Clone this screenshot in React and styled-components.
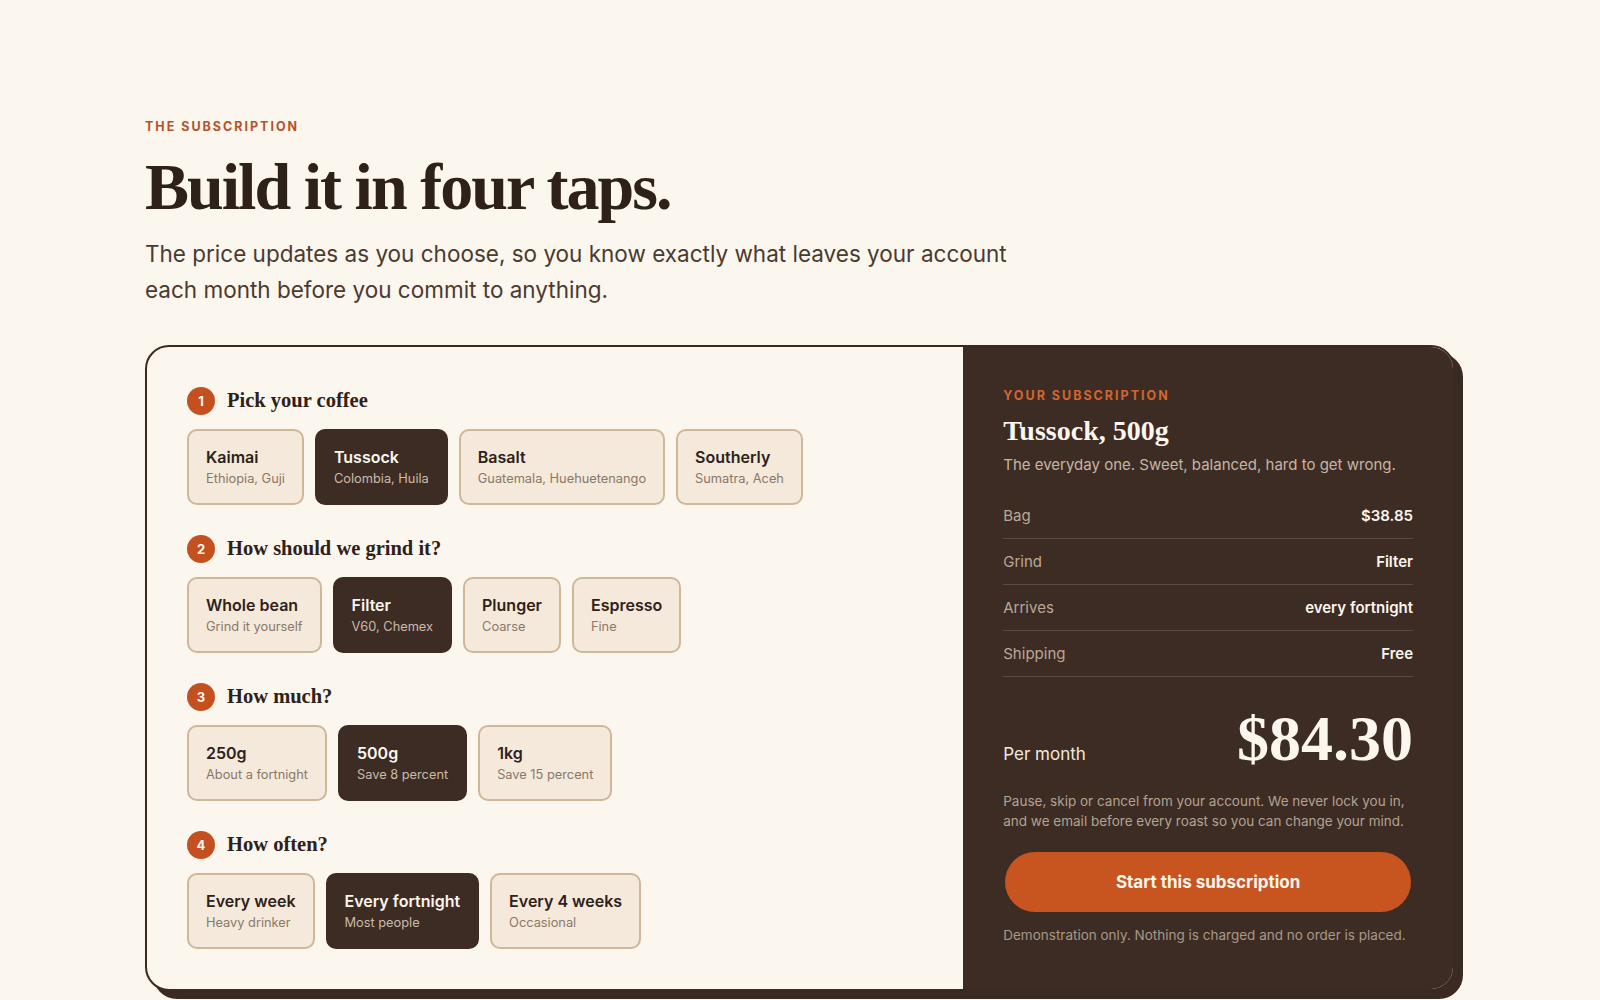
import React, { useState } from "react";
import styled, { createGlobalStyle } from "styled-components";

const SANS = `"Inter", "Lato", "Liberation Sans", sans-serif`;
const SERIF = `"Liberation Serif", "DejaVu Serif", serif`;

const Global = createGlobalStyle`
  * { box-sizing: border-box; }
  html, body { margin: 0; padding: 0; }
  body {
    background: #fbf6ee;
    font-family: ${SANS};
    color: #2e2119;
    -webkit-font-smoothing: antialiased;
  }
`;

const Page = styled.main`
  max-width: 1310px;
  margin: 0 auto;
  padding: 118px 0 40px;
`;

const Eyebrow = styled.div`
  font-family: ${SANS};
  font-size: 12.5px;
  font-weight: 700;
  letter-spacing: 0.16em;
  text-transform: uppercase;
  line-height: 18px;
  color: ${(p) => (p.$dark ? "#d4652f" : "#b5532a")};
`;

const Headline = styled.h1`
  margin: 15px 0 0;
  font-family: ${SERIF};
  font-weight: 700;
  font-size: 66px;
  line-height: 1.1;
  letter-spacing: -0.03em;
  color: #2e2119;
`;

const Lede = styled.p`
  margin: 12px 0 0;
  max-width: 880px;
  font-size: 22.5px;
  line-height: 36px;
  color: #4a3a30;
`;

const Card = styled.section`
  margin-top: 37px;
  display: grid;
  grid-template-columns: 5fr 3fr;
  border: 2px solid #3b2a22;
  border-radius: 24px;
  box-shadow: 8px 8px 0 #3b2a22;
  overflow: hidden;
  background: #fbf6ee;
`;

const Builder = styled.div`
  padding: 40px;
  display: flex;
  flex-direction: column;
  gap: 30px;
`;

const Step = styled.div`
  display: flex;
  flex-direction: column;
  gap: 14px;
`;

const StepHead = styled.div`
  display: flex;
  align-items: center;
  gap: 12px;
  height: 28px;
`;

const StepNum = styled.span`
  width: 28px;
  height: 28px;
  border-radius: 50%;
  background: #c4501f;
  color: #fff7ee;
  font-family: ${SANS};
  font-size: 13px;
  font-weight: 700;
  display: flex;
  align-items: center;
  justify-content: center;
`;

const StepTitle = styled.h3`
  margin: 0;
  font-family: ${SERIF};
  font-weight: 700;
  font-size: 20.5px;
  letter-spacing: 0;
  color: #2e2119;
`;

const Options = styled.div`
  display: flex;
  gap: 11px;
`;

const Option = styled.button`
  display: flex;
  flex-direction: column;
  align-items: flex-start;
  text-align: left;
  padding: 15px 17px;
  border-radius: 10px;
  border: 2px solid ${(p) => (p.$on ? "#3d2c24" : "#cfb797")};
  background: ${(p) => (p.$on ? "#3d2c24" : "#f4e9db")};
  cursor: pointer;
  font-family: ${SANS};
`;

const OptTitle = styled.span`
  font-size: 16px;
  line-height: 22px;
  font-weight: 600;
  color: ${(p) => (p.$on ? "#fbf6ee" : "#2e2119")};
`;

const OptSub = styled.span`
  margin-top: 2px;
  font-size: 12.8px;
  line-height: 18px;
  color: ${(p) => (p.$on ? "#cbbba9" : "#8a7868")};
`;

const Summary = styled.aside`
  background: #3d2c24;
  padding: 40px;
  display: flex;
  flex-direction: column;
  color: #fbf6ee;
`;

const SumTitle = styled.h2`
  margin: 10px 0 0;
  font-family: ${SERIF};
  font-weight: 700;
  font-size: 28px;
  line-height: 32px;
  letter-spacing: 0;
  color: #fbf6ee;
`;

const SumDesc = styled.p`
  margin: 6px 0 0;
  font-size: 15px;
  line-height: 24px;
  color: #c6b5a5;
`;

const Rows = styled.dl`
  margin: 16px 0 0;
`;

const Row = styled.div`
  display: flex;
  justify-content: space-between;
  align-items: center;
  height: 46px;
  border-bottom: 1px solid #5c4a3f;
`;

const RowLabel = styled.dt`
  font-size: 15px;
  color: #b9a898;
`;

const RowValue = styled.dd`
  margin: 0;
  font-size: 15px;
  font-weight: 600;
  color: #fbf6ee;
`;

const Total = styled.div`
  margin-top: 30px;
  display: flex;
  justify-content: space-between;
  align-items: baseline;
`;

const TotalLabel = styled.span`
  font-size: 17px;
  color: #f3e9dd;
`;

const TotalValue = styled.span`
  font-family: ${SERIF};
  font-weight: 700;
  font-size: 64px;
  line-height: 1;
  letter-spacing: 0;
  color: #fbf6ee;
`;

const Fine = styled.p`
  margin: ${(p) => p.$mt || 0}px 0 0;
  font-size: 13.5px;
  line-height: 20px;
  color: ${(p) => p.$c || "#b3a292"};
`;

const Cta = styled.button`
  margin: 21px 2px 0;
  height: 60px;
  border: none;
  border-radius: 30px;
  background: #c8541f;
  color: #fdf6ec;
  font-family: ${SANS};
  font-size: 17px;
  font-weight: 700;
  cursor: pointer;
`;

const coffees = [
  { id: "Kaimai", sub: "Ethiopia, Guji", base: 23.5, desc: "Bright and floral. Bergamot, peach and black tea." },
  { id: "Tussock", sub: "Colombia, Huila", base: 21.115, desc: "The everyday one. Sweet, balanced, hard to get wrong." },
  { id: "Basalt", sub: "Guatemala, Huehuetenango", base: 22, desc: "Cocoa and brown sugar, with a clean finish." },
  { id: "Southerly", sub: "Sumatra, Aceh", base: 22.5, desc: "Earthy and heavy. Cedar, spice and dark chocolate." },
];
const grinds = [
  { id: "Whole bean", sub: "Grind it yourself" },
  { id: "Filter", sub: "V60, Chemex" },
  { id: "Plunger", sub: "Coarse" },
  { id: "Espresso", sub: "Fine" },
];
const sizes = [
  { id: "250g", sub: "About a fortnight", f: 1 },
  { id: "500g", sub: "Save 8 percent", f: 1.84 },
  { id: "1kg", sub: "Save 15 percent", f: 3.4 },
];
const freqs = [
  { id: "Every week", sub: "Heavy drinker", f: 4.33 },
  { id: "Every fortnight", sub: "Most people", f: 2.17 },
  { id: "Every 4 weeks", sub: "Occasional", f: 1.08 },
];

function StepBlock({ n, title, items, value, onPick }) {
  return (
    <Step>
      <StepHead>
        <StepNum>{n}</StepNum>
        <StepTitle>{title}</StepTitle>
      </StepHead>
      <Options>
        {items.map((it) => {
          const on = it.id === value;
          return (
            <Option key={it.id} $on={on} onClick={() => onPick(it.id)}>
              <OptTitle $on={on}>{it.id}</OptTitle>
              <OptSub $on={on}>{it.sub}</OptSub>
            </Option>
          );
        })}
      </Options>
    </Step>
  );
}

export default function App() {
  const [coffee, setCoffee] = useState("Tussock");
  const [grind, setGrind] = useState("Filter");
  const [size, setSize] = useState("500g");
  const [freq, setFreq] = useState("Every fortnight");

  const c = coffees.find((x) => x.id === coffee);
  const s = sizes.find((x) => x.id === size);
  const f = freqs.find((x) => x.id === freq);
  const bag = Math.round(c.base * s.f * 100) / 100;
  const monthly = bag * f.f;

  return (
    <>
      <Global />
      <Page>
        <Eyebrow>The subscription</Eyebrow>
        <Headline>Build it in four taps.</Headline>
        <Lede>
          The price updates as you choose, so you know exactly what leaves your account each
          month before you commit to anything.
        </Lede>
        <Card>
          <Builder>
            <StepBlock n={1} title="Pick your coffee" items={coffees} value={coffee} onPick={setCoffee} />
            <StepBlock n={2} title="How should we grind it?" items={grinds} value={grind} onPick={setGrind} />
            <StepBlock n={3} title="How much?" items={sizes} value={size} onPick={setSize} />
            <StepBlock n={4} title="How often?" items={freqs} value={freq} onPick={setFreq} />
          </Builder>
          <Summary>
            <Eyebrow $dark>Your subscription</Eyebrow>
            <SumTitle>
              {coffee}, {size}
            </SumTitle>
            <SumDesc>{c.desc}</SumDesc>
            <Rows>
              <Row>
                <RowLabel>Bag</RowLabel>
                <RowValue>${bag.toFixed(2)}</RowValue>
              </Row>
              <Row>
                <RowLabel>Grind</RowLabel>
                <RowValue>{grind}</RowValue>
              </Row>
              <Row>
                <RowLabel>Arrives</RowLabel>
                <RowValue>{freq.toLowerCase()}</RowValue>
              </Row>
              <Row>
                <RowLabel>Shipping</RowLabel>
                <RowValue>Free</RowValue>
              </Row>
            </Rows>
            <Total>
              <TotalLabel>Per month</TotalLabel>
              <TotalValue>${monthly.toFixed(2)}</TotalValue>
            </Total>
            <Fine $mt={20}>
              Pause, skip or cancel from your account. We never lock you in, and we email before
              every roast so you can change your mind.
            </Fine>
            <Cta>Start this subscription</Cta>
            <Fine $mt={13} $c="#a89888">
              Demonstration only. Nothing is charged and no order is placed.
            </Fine>
          </Summary>
        </Card>
      </Page>
    </>
  );
}
